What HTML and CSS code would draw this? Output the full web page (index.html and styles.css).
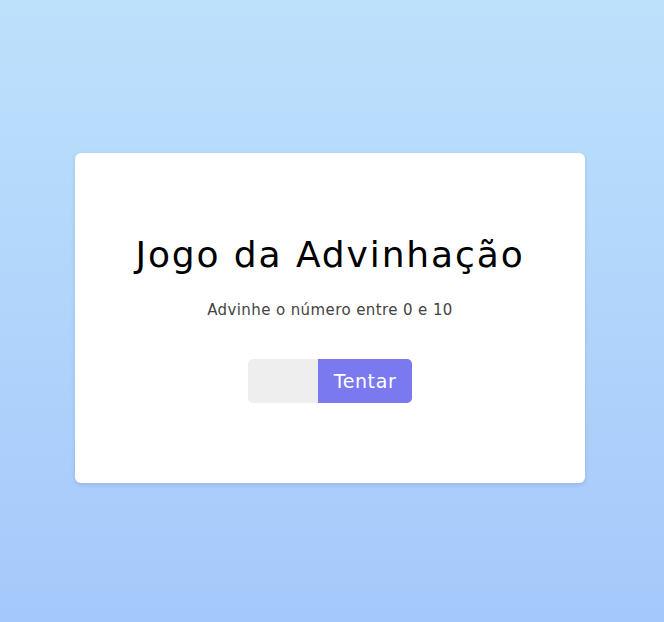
FILE: index.html
```html
<!DOCTYPE html>
<html lang="pt">
<head>
<meta charset="utf-8">
<link rel="stylesheet" href="styles.css">
<title>Jogo da Advinhação</title>
</head>
<body>
  <main class="card">
    <h1 class="title">Jogo da Advinhação</h1>
    <p class="subtitle">Advinhe o número entre 0 e 10</p>
    <form class="guess">
      <input class="guess-input" type="number">
      <button class="guess-btn" type="button">Tentar</button>
    </form>
  </main>
</body>
</html>
```
FILE: styles.css
```css
html, body {
  margin: 0;
  height: 100%;
}
body {
  background: linear-gradient(to bottom, #bde1fb, #a5c8fb);
  font-family: "DejaVu Sans", sans-serif;
  display: flex;
  flex-direction: column;
  align-items: flex-start;
  padding: 153px 0 0 75px;
  box-sizing: border-box;
}
.card {
  width: 510px;
  box-sizing: border-box;
  background: #fff;
  border-radius: 6px;
  box-shadow: 0 2px 4px rgba(60, 90, 140, 0.18);
  padding: 80px 0;
  display: flex;
  flex-direction: column;
  align-items: center;
}
.title {
  margin: 0;
  font-size: 36px;
  font-weight: 400;
  line-height: 44px;
  letter-spacing: 1.9px;
  color: #000;
}
.subtitle {
  margin: 23px 0 0;
  font-size: 15px;
  line-height: 20px;
  letter-spacing: 0.4px;
  color: #444;
}
.guess {
  margin-top: 39px;
  display: flex;
}
.guess-input {
  width: 70px;
  height: 44px;
  box-sizing: border-box;
  border: none;
  background: #eee;
  border-radius: 5px 0 0 5px;
  padding: 0 8px;
  outline: none;
}
.guess-btn {
  width: 94px;
  height: 44px;
  border: none;
  background: #7a79f0;
  color: #fff;
  border-radius: 0 5px 5px 0;
  font-family: "DejaVu Sans", sans-serif;
  font-size: 19px;
  letter-spacing: 0.6px;
  padding: 0;
}
```
